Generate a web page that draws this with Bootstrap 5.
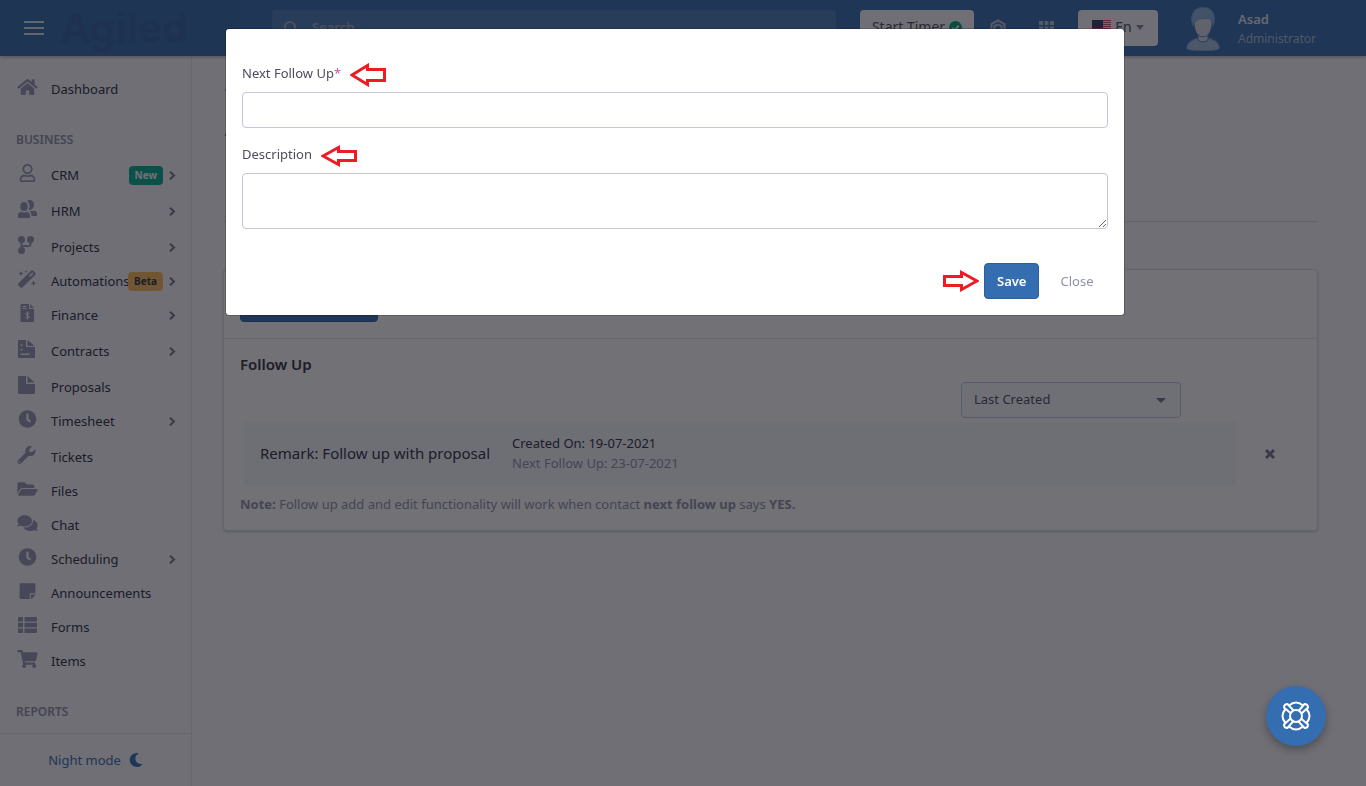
<!DOCTYPE html>
<html lang="en">
<head>
<meta charset="utf-8">
<meta name="viewport" content="width=device-width, initial-scale=1">
<title>Agiled - Follow Up</title>
<link href="https://cdn.jsdelivr.net/npm/bootstrap@5.3.0/dist/css/bootstrap.min.css" rel="stylesheet">
<style>
  :root { --brand: #346db0; --ink: #2d2d3d; --muted: #9091a8; --line: #e4e4ee; --page: #f9f9fd; }
  body { font-family: "Noto Sans", "Open Sans", sans-serif; font-size: 13px; line-height: 20px; color: var(--ink); background: var(--page); overflow: hidden; }
  svg { display: block; flex: none; }
  .form-control, .form-select, .btn { font-size: 13px; line-height: 20px; }

  .topbar { height: 56px; background: var(--brand); box-shadow: 0 1px 3px rgba(0,0,0,.3); position: relative; }
  .brand-area { width: 240px; height: 56px; padding-left: 24px; gap: 16px; background: #3169a8; }
  .brand-name { font-family: Inter, sans-serif; font-weight: 700; font-size: 41px; line-height: 48px; color: #315fa2; text-decoration: none; }
  .search-box { height: 36px; margin: 0 24px 0 32px; border-radius: 4px; background: rgba(255,255,255,.11); color: #a3adc0; padding-left: 12px; gap: 14px; }
  .search-box .form-control { background: none; border: 0; padding: 0 0 2px; color: inherit; }
  .search-box .form-control::placeholder { color: #a3adc0; opacity: 1; font-weight: 600; }
  .btn-timer, .btn-lang { height: 36px; background: #f9f9fd; border-radius: 4px; color: #4c4c5c; gap: 4px; padding: 0 12px 2px; font-size: 14px; }
  .btn-timer { width: 114px; }
  .btn-lang { width: 80px; }
  .icon-btn { width: 48px; color: #b9c2d2; }
  .user-area { width: 204px; height: 56px; margin-left: 4px; padding: 2px 0 0 23px; gap: 18px; border-left: 1px solid #3066a5; line-height: 19px; font-size: 12px; color: #abbcd4; }
  .user-area strong { font-size: 13px; font-weight: 600; color: #e3e9f2; }

  .shell { height: calc(100vh - 56px); }
  .sidebar { width: 192px; border-right: 1px solid var(--line); }
  .sidebar-scroll { overflow: hidden; padding-top: 16px; }
  .side-title { font-size: 12px; font-weight: 600; color: var(--muted); padding: 0 16px; margin: 24px 0 8px; line-height: 20px; }
  .side-link { height: 34px; padding: 0 15px 0 17px; color: var(--ink); text-decoration: none; }
  .side-link.tall { margin-bottom: 2px; }
  .side-link > svg:first-child { color: #9697b5; margin: 0 13px 4px 0; }
  .side-link .arrow { color: #77778a; margin-left: auto; }
  .side-link .tag { font-size: 10px; font-weight: 700; line-height: 19px; border-radius: 4px; padding: 0 6px; margin: 0 -8px 0 auto; }
  .side-link .tag + .arrow { margin-left: 14px; }
  .tag-new { background: #02b08f; color: #fff; }
  .tag-beta { background: #ffbc58; color: var(--ink); }
  .side-link .label-tight { width: 77px; white-space: nowrap; }
  .night { height: 53px; border-top: 1px solid var(--line); color: var(--brand); text-decoration: none; gap: 8px; }

  .page { padding: 20px 48px 0 31px; }
  .crumb { height: 28px; padding-left: 2px; color: var(--muted); }
  .page-title { font-size: 17px; line-height: 24px; font-weight: 600; margin: 14px 0 79px; padding-left: 2px; }
  .tabs-line { border-bottom: 1px solid #dcdce8; margin-bottom: 47px; }
  .panel { background: #fff; border: 1px solid #dfdfe9; border-radius: 4px; box-shadow: 0 1px 2px rgba(60,60,90,.25); }
  .panel-head { padding: 16px; border-bottom: 1px solid var(--line); }
  .btn-brand { --bs-btn-bg: var(--brand); --bs-btn-color: #fff; --bs-btn-border-color: #2c5f9c; --bs-btn-hover-bg: #2c5f9c; --bs-btn-hover-color: #fff; border-radius: 4px; height: 36px; padding: 0 12px; font-weight: 600; }
  .btn-add { min-width: 138px; }
  .panel-body { padding: 15px 16px 16px; }
  .panel-title { font-size: 15px; line-height: 20px; font-weight: 600; margin: 0 0 8px; }
  .sort { width: 220px; height: 36px; margin-right: 120px; padding: 0 12px 2px; border-color: #c4c4dc; border-radius: 4px; color: #4c4c5c; background-color: #fafafe;
    background-image: url("data:image/svg+xml,%3Csvg xmlns='http://www.w3.org/2000/svg' viewBox='0 0 10 5'%3E%3Cpath fill='%2372728f' d='M0 0h10L5 5z'/%3E%3C/svg%3E"); background-size: 10px 5px; background-position: right 14px center; }
  .remark { background: #f8f8fd; height: 64px; padding: 0 16px 2px; gap: 22px; margin: 4px 28px 0 4px; }
  .remark-title { font-size: 15px; }
  .soft { color: var(--muted); }
  .remove { width: 12px; margin: 4px 25px 0 0; color: #77778f; }
  .note { color: var(--muted); margin: 8px 0 0; }

  .modal-backdrop { --bs-backdrop-bg: #13131b; --bs-backdrop-opacity: .6; }
  .modal { padding-right: 16px; overflow: hidden; }
  .modal-dialog { max-width: 900px; margin: 28px auto; }
  .modal-content { border-radius: 4px; padding: 32px 16px 16px; }
  .modal-content { --bs-modal-border-width: 1px; }
  .modal label { color: #4c4c5c; line-height: 24px; }
  .modal .form-control { border-color: #c4c4da; border-radius: 4px; }
  .field-row { gap: 9px; height: 24px; }
  .field-row + .form-control { margin-top: 7px; }
  .field-line { height: 36px; margin-bottom: 14px; }
  .field-area { height: 56px; min-height: 56px; }
  .star { color: #c35ba9; }
  .actions { margin-top: 34px; margin-right: -7px; }
  .actions .save { width: 55px; margin-left: 5px; }
  .btn-plain { color: var(--muted); height: 36px; width: 76px; padding: 0; }
  .help { position: fixed; right: 40px; bottom: 40px; width: 60px; height: 60px; border-radius: 50%; padding: 0; border: 0; background: var(--brand); box-shadow: 0 4px 8px rgba(0,0,0,.3); z-index: 1060; }
</style>
</head>
<body>
<header class="topbar d-flex align-items-center">
  <div class="brand-area d-flex align-items-center">
    <button class="btn p-0 border-0" type="button" aria-label="Menu"><svg width="20" height="14" stroke="#dde4ee" stroke-width="2"><path d="M0 1h20M0 7h20M0 13h20"/></svg></button>
    <a class="brand-name" href="#">Agiled</a>
  </div>
  <div class="search-box d-flex align-items-center flex-grow-1">
    <svg width="14" height="14" fill="none" stroke="currentColor" stroke-width="2"><circle cx="6" cy="6" r="5"/><path d="M9.500 9.500 13 13"/></svg>
    <input class="form-control shadow-none" type="search" placeholder="Search" aria-label="Search">
  </div>
  <button class="btn btn-timer d-flex align-items-center justify-content-center text-nowrap" type="button">Start Timer
    <svg width="13" height="13" viewBox="0 0 14 14"><circle cx="7" cy="7" r="7" fill="#02a078"/><path d="m3.500 7.500 2.500 2.500 4.500-5" fill="none" stroke="#fff" stroke-width="2"/></svg></button>
  <button class="btn icon-btn border-0 p-0" type="button" aria-label="Modules"><svg class="mx-auto" width="16" height="18" viewBox="0 0 16 18" fill="none" stroke="currentColor" stroke-width="2"><path d="M1.500 5 8 1.500 14.500 5v8L8 16.500 1.500 13z"/><path d="m4.500 7 3.500-1.500L11.500 7v3.500L8 12l-3.500-1.500z"/></svg></button>
  <button class="btn icon-btn border-0 p-0" type="button" aria-label="Apps"><svg class="mx-auto" width="15" height="15" fill="currentColor"><path d="M0 0h4v4H0zM5.500 0h4v4h-4zM11 0h4v4h-4zM0 5.500h4v4H0zM5.500 5.500h4v4h-4zM11 5.500h4v4h-4zM0 11h4v4H0zM5.500 11h4v4h-4zM11 11h4v4h-4z"/></svg></button>
  <button class="btn btn-lang d-flex align-items-center justify-content-center ms-2" type="button">
    <svg width="19" height="14" viewBox="0 0 19 14"><path fill="#f3f3f8" d="M0 0h19v14H0z"/><path stroke="#cf4a5a" stroke-width="1" d="M0 .5h19M0 2.500h19M0 4.500h19M0 6.500h19M0 8.500h19M0 10.500h19M0 12.500h19"/><path fill="#303a6c" d="M0 0h11v8H0z"/></svg>
    En <svg width="8" height="5"><path fill="#84849a" d="M0 0h8L4 5z"/></svg></button>
  <div class="user-area d-flex align-items-center">
    <svg width="34" height="44" viewBox="0 0 34 44"><path fill="#a4bfdf" stroke="#6fa0d4" d="M1 42c-1-6 5-9 11-11h10c7 2 12 5 11 11-7 2.500-25 2.500-32 0z"/><path fill="#d6dae4" stroke="#4a82bd" d="M12 27v6q5 4 10 0v-6z"/><path fill="#d6dae4" stroke="#4a82bd" d="M8 14c0 9 3 16 9 16s9-7 9-16l-4-6H11z"/><path fill="#89b1de" stroke="#6fa0d4" d="M7 19C3 7 9 0 17 .5 26 0 31 8 27 19c-1-3-1-5-3-8-6 1-10 0-13 2-3 1-2 4-4 6z"/></svg>
    <div><strong class="d-block">Asad</strong>Administrator</div>
  </div>
</header>

<div class="shell d-flex">
  <nav class="sidebar d-flex flex-column flex-shrink-0" aria-label="Main">
    <div class="sidebar-scroll flex-grow-1">
      <a class="side-link d-flex align-items-center" href="#"><svg width="21" height="18" viewBox="0 0 576 512" fill="currentColor"><path d="M280.370 148.260L96 300.110V464a16 16 0 0 0 16 16l112.060-.29a16 16 0 0 0 15.920-16V368a16 16 0 0 1 16-16h64a16 16 0 0 1 16 16v95.640a16 16 0 0 0 16 16.050L464 480a16 16 0 0 0 16-16V300L295.670 148.260a12.190 12.190 0 0 0-15.300 0zM571.600 251.470L488 182.560V44.050a12 12 0 0 0-12-12h-56a12 12 0 0 0-12 12v72.610L318.470 43a48 48 0 0 0-61 0L4.340 251.470a12 12 0 0 0-1.600 16.900l25.500 31A12 12 0 0 0 45.150 301l235.220-193.740a12.190 12.190 0 0 1 15.300 0L530.900 301a12 12 0 0 0 16.900-1.600l25.500-31a12 12 0 0 0-1.700-16.930z"/></svg>Dashboard</a>
      <h2 class="side-title">BUSINESS</h2>
      <a class="side-link tall d-flex align-items-center" href="#"><svg width="21" height="18" viewBox="-64 0 576 512" fill="currentColor"><path d="M313.600 304c-28.700 0-42.500 16-89.600 16-47.100 0-60.800-16-89.600-16C60.200 304 0 364.200 0 438.400V464c0 26.500 21.500 48 48 48h352c26.500 0 48-21.500 48-48v-25.600c0-74.200-60.200-134.400-134.400-134.400zM400 464H48v-25.600c0-47.600 38.800-86.400 86.400-86.400 14.600 0 38.300 16 89.600 16 51.700 0 74.900-16 89.600-16 47.600 0 86.400 38.800 86.400 86.400V464zM224 288c79.500 0 144-64.500 144-144S303.500 0 224 0 80 64.500 80 144s64.500 144 144 144zm0-240c52.900 0 96 43.100 96 96s-43.100 96-96 96-96-43.100-96-96 43.100-96 96-96z"/></svg>CRM<span class="tag tag-new">New</span><svg class="arrow" width="7" height="9" fill="none" stroke="currentColor" stroke-width="2"><path d="M1 .7 5 4.500 1 8.300"/></svg></a>
      <a class="side-link tall d-flex align-items-center" href="#"><svg width="21" height="18" viewBox="0 0 21 18" fill="currentColor"><ellipse cx="7" cy="6.500" rx="3.700" ry="4.500"/><path d="M1 18v-3c0-2 2-3 3.500-3.300Q7 13.500 9.500 11.700C11 12 13 13 13 15v3zM10 .8c4-2 7 .5 7 4 0 3-2 5.500-4.500 5-1-.4-1-1 0-2C13 5 12 2.500 10 .8zM14 11q2 .3 3-.5c2 .5 3 1.500 3 3V16h-5.500c0-2-.5-3.500-2-4.500z"/></svg>HRM<svg class="arrow" width="7" height="9" fill="none" stroke="currentColor" stroke-width="2"><path d="M1 .7 5 4.500 1 8.300"/></svg></a>
      <a class="side-link d-flex align-items-center" href="#"><svg width="21" height="18" viewBox="0 0 21 18"><g fill="currentColor"><circle cx="4.500" cy="3.500" r="3.500"/><circle cx="13.500" cy="3.500" r="3.500"/><circle cx="4.500" cy="14.500" r="3.500"/></g><path fill="none" stroke="currentColor" stroke-width="2" d="M4.500 4v10M13.500 5v3q0 2-2 2h-4q-3 0-3 2"/></svg>Projects<svg class="arrow" width="7" height="9" fill="none" stroke="currentColor" stroke-width="2"><path d="M1 .7 5 4.500 1 8.300"/></svg></a>
      <a class="side-link d-flex align-items-center" href="#"><svg width="21" height="18" viewBox="0 0 21 18" fill="currentColor"><path fill-rule="evenodd" d="M14.200.6q.9-.9 1.800 0l2.400 2.400q.9.900 0 1.800L5.300 17.500q-.9.900-1.800 0l-2.200-2.200q-.9-.9 0-1.800zM15.200 2.500l-3.300 3.300 1.200 1.200 3.300-3.300zM4 1l.8 1.700L6.500 3.500l-1.700.8L4 6l-.8-1.700-1.700-.8 1.700-.8zM9 0l.4 1.100 1.100.4-1.100.4L9 3l-.4-1.100-1.100-.4 1.100-.4zM16.500 10.500l.8 1.900 1.900.8-1.900.8-.8 1.900-.8-1.900-1.900-.8 1.900-.8z"/></svg><span class="label-tight">Automations</span><span class="tag tag-beta">Beta</span><svg class="arrow" width="7" height="9" fill="none" stroke="currentColor" stroke-width="2"><path d="M1 .7 5 4.500 1 8.300"/></svg></a>
      <a class="side-link tall d-flex align-items-center" href="#"><svg width="21" height="18" viewBox="0 0 21 18"><path fill="currentColor" d="M4.500 0H12v5h5v12q0 1-1 1H4.500q-1 0-1-1V1q0-1 1-1zM13 0l4 4h-4z"/><path stroke="#f9f9fd" d="M5.500 2.500h4M5.500 4.500h4M10.500 7.500v8" fill="none"/><path stroke="#f9f9fd" fill="none" d="M12.500 9.500q-4-1.500-4 .5 0 1 2 1.500t2 1.500q0 2-4 .5"/></svg>Finance<svg class="arrow" width="7" height="9" fill="none" stroke="currentColor" stroke-width="2"><path d="M1 .7 5 4.500 1 8.300"/></svg></a>
      <a class="side-link tall d-flex align-items-center" href="#"><svg width="21" height="18" viewBox="0 0 21 18"><path fill="currentColor" d="M2 0h7v7h9v10q0 1-1 1H2q-1 0-1-1V1q0-1 1-1zM10.500 0l7 6h-7z"/><path fill="#f9f9fd" d="M3.500 4.500h2v1.500h-2zM3.500 9h2v1.500h-2zM3.500 13.500h9V15h-9z"/></svg>Contracts<svg class="arrow" width="7" height="9" fill="none" stroke="currentColor" stroke-width="2"><path d="M1 .7 5 4.500 1 8.300"/></svg></a>
      <a class="side-link d-flex align-items-center" href="#"><svg width="21" height="18" viewBox="0 0 21 18" fill="currentColor"><path d="M2 0h7v8h9v9q0 1-1 1H2q-1 0-1-1V1q0-1 1-1zM10.500 0l7 6.500h-7z"/></svg>Proposals</a>
      <a class="side-link tall d-flex align-items-center" href="#"><svg width="21" height="18" viewBox="-32 0 576 512" fill="currentColor"><path d="M256,8C119,8,8,119,8,256S119,504,256,504,504,393,504,256,393,8,256,8Zm92.490,313h0l-20,25a16,16,0,0,1-22.490,2.500h0l-67-49.720a40,40,0,0,1-15-31.230V112a16,16,0,0,1,16-16h32a16,16,0,0,1,16,16V256l58,42.500A16,16,0,0,1,348.490,321Z"/></svg>Timesheet<svg class="arrow" width="7" height="9" fill="none" stroke="currentColor" stroke-width="2"><path d="M1 .7 5 4.500 1 8.300"/></svg></a>
      <a class="side-link d-flex align-items-center" href="#"><svg width="21" height="18" viewBox="0 0 576 512" fill="currentColor"><path d="M507.730 109.100c-2.240-9.030-13.540-12.090-20.120-5.510l-74.360 74.360-67.880-11.310-11.310-67.880 74.360-74.360c6.620-6.620 3.430-17.900-5.660-20.160-47.380-11.740-99.550.91-136.580 37.930-39.640 39.640-50.550 97.100-34.050 147.200L18.740 402.760c-24.990 24.990-24.990 65.510 0 90.500 24.990 24.990 65.510 24.990 90.500 0l213.210-213.210c50.120 16.710 107.470 5.680 147.370-34.220 37.070-37.070 49.700-89.320 37.910-136.730zM64 472c-13.250 0-24-10.750-24-24 0-13.260 10.750-24 24-24s24 10.740 24 24c0 13.250-10.750 24-24 24z"/></svg>Tickets</a>
      <a class="side-link d-flex align-items-center" href="#"><svg width="21" height="18" viewBox="0 0 576 512" fill="currentColor"><path d="M572.694 292.093L500.270 416.248A63.997 63.997 0 0 1 444.989 448H45.025c-18.523 0-30.064-20.093-20.731-36.093l72.424-124.155A64 64 0 0 1 152 256h399.964c18.523 0 30.064 20.093 20.730 36.093zM152 224h328v-48c0-26.510-21.490-48-48-48H272l-64-64H48C21.490 64 0 85.490 0 112v278.046l69.077-118.418C86.214 242.250 117.989 224 152 224z"/></svg>Files</a>
      <a class="side-link d-flex align-items-center" href="#"><svg width="21" height="18" viewBox="0 0 576 512" fill="currentColor"><path d="M416 192c0-88.400-93.100-160-208-160S0 103.600 0 192c0 34.300 14.100 65.900 38 92-13.400 30.200-35.500 54.200-35.800 54.500-2.200 2.300-2.800 5.700-1.500 8.700S4.800 352 8 352c36.600 0 66.900-12.300 88.700-25 32.200 15.700 70.300 25 111.300 25 114.900 0 208-71.600 208-160zm122 220c23.900-26 38-57.700 38-92 0-66.900-53.500-124.200-129.300-148.100.9 6.600 1.300 13.300 1.300 20.100 0 105.900-107.700 192-240 192-10.800 0-21.300-.8-31.700-1.900C207.800 439.600 281.800 480 368 480c41 0 79.100-9.200 111.300-25 21.800 12.700 52.100 25 88.700 25 3.200 0 6.100-1.900 7.300-4.800 1.300-2.900.7-6.300-1.500-8.700-.3-.3-22.400-24.200-35.800-54.500z"/></svg>Chat</a>
      <a class="side-link d-flex align-items-center" href="#"><svg width="21" height="18" viewBox="-32 0 576 512" fill="currentColor"><path d="M256,8C119,8,8,119,8,256S119,504,256,504,504,393,504,256,393,8,256,8Zm92.490,313h0l-20,25a16,16,0,0,1-22.490,2.500h0l-67-49.720a40,40,0,0,1-15-31.230V112a16,16,0,0,1,16-16h32a16,16,0,0,1,16,16V256l58,42.500A16,16,0,0,1,348.490,321Z"/></svg>Scheduling<svg class="arrow" width="7" height="9" fill="none" stroke="currentColor" stroke-width="2"><path d="M1 .7 5 4.500 1 8.300"/></svg></a>
      <a class="side-link d-flex align-items-center" href="#"><svg width="21" height="18" viewBox="-64 0 576 512" fill="currentColor"><path d="M312 320h136V56c0-13.300-10.700-24-24-24H24C10.700 32 0 42.700 0 56v400c0 13.300 10.700 24 24 24h264V344c0-13.200 10.800-24 24-24zm129 55l-98 98c-4.500 4.500-10.600 7-17 7h-6V352h128v6.100c0 6.300-2.500 12.400-7 16.900z"/></svg>Announcements</a>
      <a class="side-link d-flex align-items-center" href="#"><svg width="21" height="18" viewBox="0 0 21 18" fill="currentColor"><path d="M2 1h4v4.500H1V2q0-1 1-1zM7.500 1H19q1 0 1 1v3.500H7.500zM1 6.700h5v4.600H1zM7.500 6.700H20v4.600H7.500zM1 12.500h5V17H2q-1 0-1-1zM7.500 12.500H20V16q0 1-1 1H7.500z"/></svg>Forms</a>
      <a class="side-link d-flex align-items-center" href="#"><svg width="21" height="18" viewBox="0 0 576 512" fill="currentColor"><path d="M528.120 301.319l47.273-208C578.806 78.301 567.391 64 551.990 64H159.208l-9.166-44.810C147.758 8.021 137.930 0 126.529 0H24C10.745 0 0 10.745 0 24v16c0 13.255 10.745 24 24 24h69.883l70.248 343.435C147.325 417.100 136 435.222 136 456c0 30.928 25.072 56 56 56s56-25.072 56-56c0-15.674-6.447-29.835-16.824-40h209.647C430.447 426.165 424 440.326 424 456c0 30.928 25.072 56 56 56s56-25.072 56-56c0-22.172-12.888-41.332-31.579-50.405l5.517-24.276c3.413-15.018-8.002-29.319-23.403-29.319H218.117l-6.545-32h293.145c11.206 0 20.920-7.754 23.403-18.681z"/></svg>Items</a>
      <h2 class="side-title">REPORTS</h2>
    </div>
    <a class="night d-flex align-items-center justify-content-center flex-shrink-0" href="#">Night mode <svg width="14" height="14" viewBox="0 0 512 512" fill="currentColor"><path d="M283.211 512c78.962 0 151.079-35.925 198.857-94.792 7.068-8.708-.639-21.430-11.562-19.350-124.203 23.654-238.262-71.576-238.262-196.954 0-72.222 38.662-138.635 101.498-174.394 9.686-5.512 7.250-20.197-3.756-22.230A258.156 258.156 0 0 0 283.211 0c-141.309 0-256 114.511-256 256 0 141.309 114.511 256 256 256z"/></svg></a>
  </nav>

  <main class="page flex-grow-1">
    <div class="crumb d-flex align-items-center"><svg width="6" height="10" fill="none" stroke="currentColor" stroke-width="2"><path d="M5 1 1 5l4 4"/></svg></div>
    <h1 class="page-title">Asad</h1>
    <div class="tabs-line"></div>
    <section class="panel">
      <div class="panel-head"><button class="btn btn-brand btn-add" type="button">New Follow Up +</button></div>
      <div class="panel-body">
        <h2 class="panel-title">Follow Up</h2>
        <div class="d-flex justify-content-end"><select class="form-select sort" aria-label="Sort order"><option>Last Created</option></select></div>
        <div class="d-flex align-items-center">
          <div class="remark d-flex align-items-center flex-grow-1">
            <div class="remark-title">Remark: Follow up with proposal</div>
            <div>Created On: 19-07-2021<br><span class="soft">Next Follow Up: 23-07-2021</span></div>
          </div>
          <button class="btn p-0 border-0 remove d-flex justify-content-center" type="button" aria-label="Remove"><svg width="10" height="10" stroke="currentColor" stroke-width="3"><path d="m1 1 8 8M9 1 1 9"/></svg></button>
        </div>
        <p class="note"><b>Note:</b> Follow up add and edit functionality will work when contact <b>next follow up</b> says <b>YES.</b></p>
      </div>
    </section>
  </main>
</div>

<div class="modal-backdrop show"></div>
<div class="modal show d-block" role="dialog" aria-label="Add follow up">
  <div class="modal-dialog">
    <form class="modal-content">
      <div class="field-row d-flex align-items-center">
        <label for="nextDate">Next Follow Up<span class="star">*</span></label>
        <svg class="mt-1" width="36" height="24" fill="none" stroke="#ed1c24" stroke-width="3"><path d="M2 12 17.500 2.500V6.500H34.500V17.500H17.500V21.500z"/></svg>
      </div>
      <input class="form-control field-line" id="nextDate" type="text">
      <div class="field-row d-flex align-items-center">
        <label for="desc">Description</label>
        <svg class="mt-1" width="36" height="22" fill="none" stroke="#ed1c24" stroke-width="3"><path d="M2 11 17.500 2.500V6.500H34.500V15.500H17.500V19.500z"/></svg>
      </div>
      <textarea class="form-control field-area" id="desc"></textarea>
      <div class="d-flex justify-content-end align-items-center actions">
        <svg width="37" height="22" fill="none" stroke="#ed1c24" stroke-width="3"><path d="M35 11 19.500 2.500V6.500H2.500V15.500H19.500V19.500z"/></svg>
        <button class="btn btn-brand save" type="button">Save</button>
        <button class="btn btn-plain border-0" type="button">Close</button>
      </div>
    </form>
  </div>
</div>
<button class="help d-flex align-items-center justify-content-center" type="button" aria-label="Help">
  <svg width="30" height="30" viewBox="0 0 30 30" fill="none" stroke="#fff" stroke-width="2"><circle cx="15" cy="15" r="6"/><path d="M8 4.500Q15-1.500 22 4.500M25.500 8Q31.500 15 25.500 22M22 25.500Q15 31.500 8 25.500M4.500 22Q-1.500 15 4.500 8"/><path d="M9.500 12 3 6.500Q3 3 6.500 3l6 6.500M18 9.500 23.500 3Q27 3 27 6.500l-6.500 6M20.500 18 27 23.500Q27 27 23.500 27l-6-6.500M12 20.500 6.500 27Q3 27 3 23.500l6.500-6"/></svg>
</button>
<script src="https://cdn.jsdelivr.net/npm/bootstrap@5.3.0/dist/js/bootstrap.bundle.min.js"></script>
</body>
</html>
